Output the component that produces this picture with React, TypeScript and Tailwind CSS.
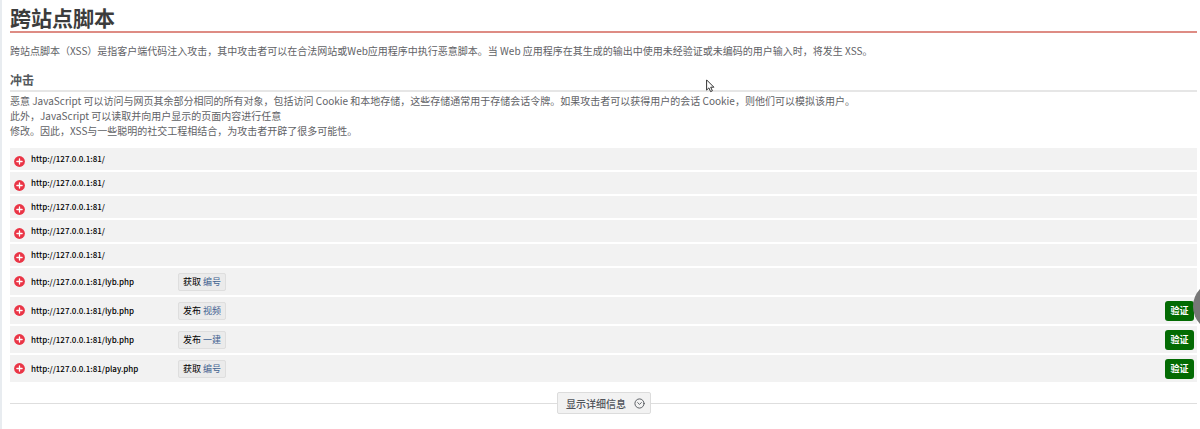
import { CircleChevronDown } from "lucide-react"

type Finding = {
  id: number
  url: string
  method?: string
  param?: string
  verifiable?: boolean
}

const summaryFindings: Finding[] = [
  { id: 1, url: "http://127.0.0.1:81/" },
  { id: 2, url: "http://127.0.0.1:81/" },
  { id: 3, url: "http://127.0.0.1:81/" },
  { id: 4, url: "http://127.0.0.1:81/" },
  { id: 5, url: "http://127.0.0.1:81/" },
]

const paramFindings: Finding[] = [
  { id: 6, url: "http://127.0.0.1:81/lyb.php", method: "获取", param: "编号" },
  { id: 7, url: "http://127.0.0.1:81/lyb.php", method: "发布", param: "视频", verifiable: true },
  { id: 8, url: "http://127.0.0.1:81/lyb.php", method: "发布", param: "一建", verifiable: true },
  { id: 9, url: "http://127.0.0.1:81/play.php", method: "获取", param: "编号", verifiable: true },
]

function ExpandButton({ className }: { className?: string }) {
  return (
    <button type="button" aria-label="展开" className={className}>
      <svg className="block h-[11px] w-[11px]" viewBox="0 0 11 11">
        <circle cx="5.5" cy="5.5" r="5.4" fill="#ea3546" />
        <path d="M5.5 2.9v5.2M2.9 5.5h5.2" stroke="#fff" strokeWidth="1.3" strokeLinecap="round" />
      </svg>
    </button>
  )
}

function SummaryRow({ finding }: { finding: Finding }) {
  return (
    <li className="flex h-[22px] items-center gap-[6px] bg-[#f2f2f2] pl-1">
      <ExpandButton className="mb-[3px] self-end" />
      <span className="text-[8px]">{finding.url}</span>
    </li>
  )
}

function ParamRow({ finding }: { finding: Finding }) {
  return (
    <li className="flex h-[27px] items-center bg-[#f2f2f2] pr-[3px] pl-1">
      <ExpandButton className="mr-[6px]" />
      <span className="w-[147px] text-[8px]">{finding.url}</span>
      <span className="flex h-[18px] w-12 items-center justify-center gap-[2px] rounded-[2px] border border-[#dedede] bg-[#ebebeb] font-normal">
        {finding.method}
        <a href="#param" className="text-[#3f6290]">
          {finding.param}
        </a>
      </span>
      {finding.verifiable ? (
        <button
          type="button"
          className="ml-auto h-5 w-[29px] rounded-[3px] bg-[#036b03] font-bold text-white"
        >
          验证
        </button>
      ) : null}
    </li>
  )
}

export default function App() {
  return (
    <div className="relative min-h-screen overflow-hidden border-l-2 border-[#e8ecf0] bg-white pr-[3px] pl-2 font-['Noto_Sans_CJK_SC',sans-serif] text-[10px] leading-[15px] text-[#5f6266]">
      <h1 className="border-b-2 border-[#de8c84] pt-[5px] pb-[2px] text-[21px] leading-6 font-bold text-[#3c3c3c]">
        跨站点脚本
      </h1>
      <p className="mt-[10px]">
        跨站点脚本（XSS）是指客户端代码注入攻击，其中攻击者可以在合法网站或Web应用程序中执行恶意脚本。当 Web
        应用程序在其生成的输出中使用未经验证或未编码的用户输入时，将发生 XSS。
      </p>

      <h2 className="mt-[14px] border-b-2 border-[#e6e6e6] pb-[2px] text-[12px] leading-4 font-bold text-[#54585c]">
        冲击
      </h2>
      <p className="mt-[1px]">
        恶意 JavaScript 可以访问与网页其余部分相同的所有对象，包括访问 Cookie
        和本地存储，这些存储通常用于存储会话令牌。如果攻击者可以获得用户的会话 Cookie，则他们可以模拟该用户。
        <br />
        此外，JavaScript 可以读取并向用户显示的页面内容进行任意
        <br />
        修改。因此，XSS与一些聪明的社交工程相结合，为攻击者开辟了很多可能性。
      </p>

      <div className="mt-[10px] flex flex-col gap-[2px] text-[9px] leading-3 font-medium text-black">
        <ul className="flex flex-col gap-[2px]">
          {summaryFindings.map((finding) => (
            <SummaryRow key={finding.id} finding={finding} />
          ))}
        </ul>
        <ul className="flex flex-col gap-[2px]">
          {paramFindings.map((finding) => (
            <ParamRow key={finding.id} finding={finding} />
          ))}
        </ul>
      </div>

      <div className="mt-[10px] flex items-center">
        <span className="h-px flex-1 bg-[#dedede]" />
        <button
          type="button"
          className="flex h-[22px] w-[94px] items-center justify-center gap-2 rounded-[2px] border border-[#dcdcdc] bg-[#f2f2f2] pl-1 font-medium text-[#50545a]"
        >
          显示详细信息
          <CircleChevronDown className="h-[11px] w-[11px]" strokeWidth={2} />
        </button>
        <span className="h-px flex-1 bg-[#dedede]" />
      </div>

      <div className="absolute top-[281px] -right-11 h-[51px] w-[51px] rounded-full bg-[#777]" />

      <svg className="absolute top-[79px] left-[704px] h-[14px] w-[9px]" viewBox="0 0 9 14">
        <path
          d="M.6.9v10.2l2.3-2.2 1.7 3.7 1.8-.8-1.7-3.6h3.2z"
          fill="#fff"
          stroke="#333"
          strokeWidth="1"
        />
      </svg>
    </div>
  )
}
